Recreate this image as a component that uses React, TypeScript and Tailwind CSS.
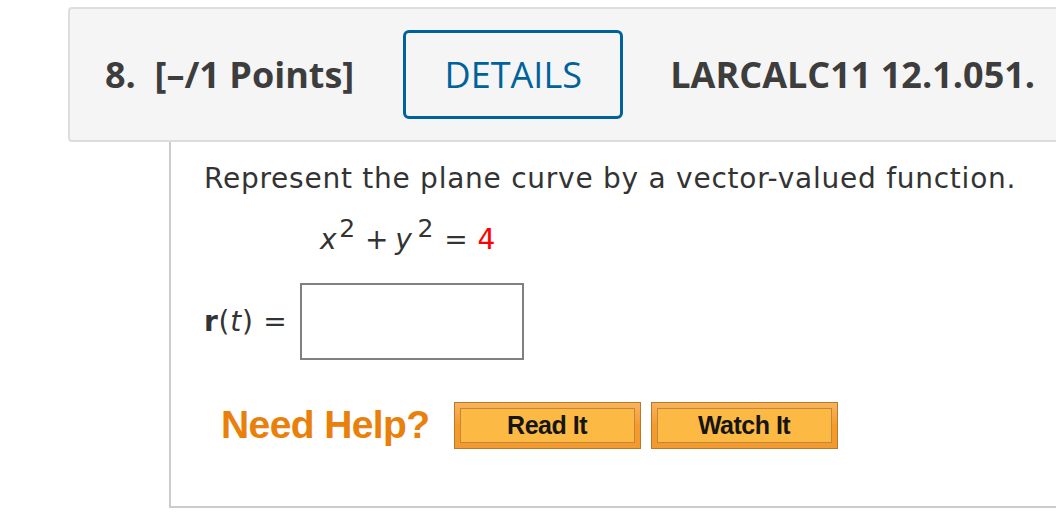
const openSans = { fontFamily: '"Open Sans", "Liberation Sans", sans-serif' };
const dejavu = { fontFamily: '"DejaVu Sans", Verdana, sans-serif' };

function HelpButton({ label }: { label: string }) {
  return (
    <button className="h-[47px] w-[187px] border border-[#b8782f] bg-gradient-to-b from-[#f9b35a] via-[#f59b2b] to-[#f39a2e] p-[5px]">
      <div className="flex h-full w-full items-center justify-center border border-[#c2873f] bg-[#fcb944] font-['Liberation_Sans',Arial,sans-serif] text-[25px] font-bold tracking-[-0.5px] text-[#151515]">
        {label}
      </div>
    </button>
  );
}

export default function App() {
  return (
    <div className="h-[520px] w-[1056px] overflow-hidden bg-white pl-[68px] pt-[7px]">
      <div
        className="-mr-[20px] flex h-[135px] items-center rounded-[4px] border-2 border-[#dddddd] bg-[#f5f5f5] pl-[35px] text-[36px] font-bold text-[#3d3d3d]"
        style={openSans}
      >
        <span className="whitespace-pre">8.  [–/1 Points]</span>
        <div className="ml-[49px] flex h-[89px] w-[220px] items-center justify-center rounded-[6px] border-[3px] border-[#00629b] font-normal text-[#00629b]">
          DETAILS
        </div>
        <span className="ml-[47px] whitespace-nowrap">LARCALC11 12.1.051.</span>
      </div>

      <div
        className="ml-[101px] h-[366px] border-b-2 border-l-2 border-[#cccccc] pl-[33px] pt-[17px] text-[28px] tracking-[0.75px] text-[#333333]"
        style={dejavu}
      >
        <p className="leading-[40px]">Represent the plane curve by a vector-valued function.</p>

        <div className="ml-[116px] mt-[21px] flex items-baseline leading-[40px]">
          <i>x</i>
          <sup className="ml-[2px] text-[25px]">2</sup>
          <span className="ml-[9px]">+</span>
          <i className="ml-[6px]">y</i>
          <sup className="ml-[5px] text-[25px]">2</sup>
          <span className="ml-[10px]">=</span>
          <span className="ml-[9px] text-[#ff0000]">4</span>
        </div>

        <div className="mt-[23px] flex items-center">
          <span>
            <b>r</b>(<i>t</i>) =
          </span>
          <div className="ml-[12px] h-[77px] w-[224px] border-2 border-[#808080]" />
        </div>

        <div className="ml-[17px] mt-[36px] flex items-center">
          <span className="mr-[24px] font-['Liberation_Sans',Arial,sans-serif] text-[39px] font-bold tracking-[-0.6px] text-[#e8800b]">
            Need Help?
          </span>
          <HelpButton label="Read It" />
          <div className="w-[10px]" />
          <HelpButton label="Watch It" />
        </div>
      </div>
    </div>
  );
}
